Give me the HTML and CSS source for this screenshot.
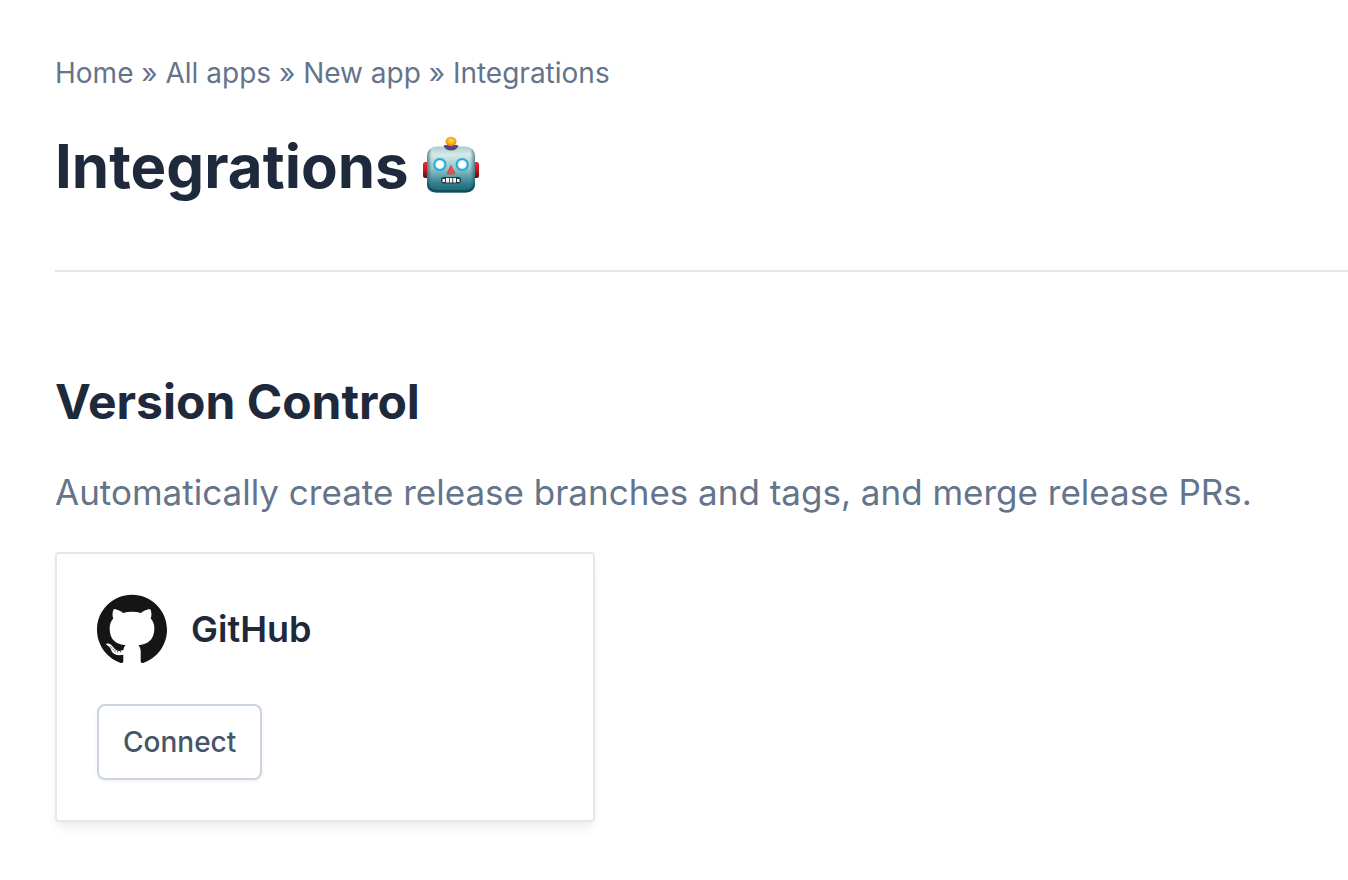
FILE: index.html
```html
<!DOCTYPE html>
<html lang="en">
<head>
<meta charset="utf-8">
<meta name="viewport" content="width=device-width, initial-scale=1">
<title>Integrations</title>
<link rel="stylesheet" href="styles.css">
</head>
<body>
<main class="page">
  <header class="page-header">
    <nav class="breadcrumbs" aria-label="Breadcrumb">
      <a href="#">Home</a> » <a href="#">All apps</a> » <a href="#">New app</a> » <a href="#">Integrations</a>
    </nav>
    <h1 class="page-title">Integrations
      <svg class="robot" viewBox="0 0 60 60" role="img" aria-label="Robot">
        <defs>
          <linearGradient id="face" x1="0" y1="0" x2="0" y2="1">
            <stop offset="0" stop-color="#a9cdce"/><stop offset=".18" stop-color="#d8eae8"/><stop offset=".5" stop-color="#8fc0c5"/><stop offset=".8" stop-color="#32808e"/><stop offset="1" stop-color="#176173"/>
          </linearGradient>
          <linearGradient id="side" x1="0" y1="0" x2="1" y2="0">
            <stop offset="0" stop-color="#205864" stop-opacity=".65"/><stop offset=".1" stop-color="#205864" stop-opacity="0"/><stop offset=".9" stop-color="#205864" stop-opacity="0"/><stop offset="1" stop-color="#205864" stop-opacity=".65"/>
          </linearGradient>
          <linearGradient id="ear" x1="0" y1="0" x2="0" y2="1">
            <stop offset="0" stop-color="#e52a30"/><stop offset=".55" stop-color="#c51522"/><stop offset="1" stop-color="#4e0b13"/>
          </linearGradient>
          <radialGradient id="bulb" cx=".5" cy=".4" r=".6">
            <stop offset="0" stop-color="#ffe34d"/><stop offset=".6" stop-color="#f9a81c"/><stop offset="1" stop-color="#e87817"/>
          </radialGradient>
        </defs>
        <rect x="2" y="26" width="7" height="16" rx="2.500" fill="url(#ear)"/>
        <rect x="51" y="26" width="7" height="16" rx="2.500" fill="url(#ear)"/>
        <rect x="6" y="10.500" width="48" height="46" rx="9" fill="url(#face)"/>
        <rect x="6" y="10.500" width="48" height="46" rx="9" fill="url(#side)"/>
        <path d="M6 46Q9 54 16 54H44Q51 54 54 46V48Q54 56.500 45 56.500H15Q6 56.500 6 48Z" fill="#104655" opacity=".75"/>
        <path d="M22.500 10Q22.500 9 25 9H35Q37.500 9 37.500 10Q35 14.500 30 14.500Q25 14.500 22.500 10Z" fill="#574778"/>
        <ellipse cx="30" cy="5.500" rx="5.500" ry="4.700" fill="url(#bulb)"/>
        <circle cx="18.800" cy="28.500" r="6.600" fill="#25aeda"/>
        <circle cx="41.200" cy="28.500" r="6.600" fill="#25aeda"/>
        <circle cx="18.800" cy="28.500" r="4.600" fill="#c6e9f2"/>
        <circle cx="41.200" cy="28.500" r="4.600" fill="#c6e9f2"/>
        <circle cx="18.800" cy="28.500" r="3.600" fill="#fff"/>
        <circle cx="41.200" cy="28.500" r="3.600" fill="#fff"/>
        <path d="M30 29.500L34 37.500Q30 39 26 37.500Z" fill="#e5554f" stroke="#bd3f43" stroke-width=".7"/>
        <rect x="20" y="41" width="20" height="6.500" rx="3" fill="#243d43"/>
        <path d="M21.500 43H24V46H21.500ZM25 42H28V46.500H25ZM28.800 42H31.300V46.500H28.800ZM32.200 42H35V46.500H32.200ZM36 43H38.500V46H36Z" fill="#f5f6ee"/>
      </svg>
    </h1>
  </header>
  <section class="category">
    <h2 class="category-title">Version Control</h2>
    <p class="category-text">Automatically create release branches and tags, and merge release PRs.</p>
    <article class="card">
      <div class="card-head">
        <svg class="logo" viewBox="0 0 256 250" aria-hidden="true" fill="#161514">
          <path d="M128.001 0C57.317 0 0 57.307 0 128.001c0 56.554 36.676 104.535 87.535 121.460 6.397 1.185 8.746-2.777 8.746-6.158 0-3.052-.12-13.135-.174-23.830-35.610 7.742-43.124-15.103-43.124-15.103-5.823-14.795-14.213-18.730-14.213-18.730-11.613-7.944.876-7.780.876-7.780 12.853.902 19.621 13.190 19.621 13.190 11.417 19.568 29.945 13.911 37.249 10.640 1.149-8.272 4.466-13.920 8.127-17.116-28.431-3.236-58.318-14.212-58.318-63.258 0-13.975 5-25.394 13.188-34.358-1.329-3.224-5.710-16.242 1.240-33.874 0 0 10.749-3.440 35.210 13.121 10.210-2.836 21.160-4.258 32.038-4.307 10.878.049 21.837 1.470 32.066 4.307 24.431-16.560 35.165-13.120 35.165-13.120 6.967 17.630 2.584 30.650 1.255 33.873 8.207 8.964 13.173 20.383 13.173 34.358 0 49.163-29.944 59.988-58.447 63.157 4.591 3.972 8.682 11.762 8.682 23.704 0 17.126-.148 30.910-.148 35.126 0 3.407 2.304 7.398 8.792 6.140C219.370 232.500 256 184.537 256 128.002 256 57.307 198.691 0 128.001 0z"/>
          <ellipse cx="49" cy="190" rx="2" ry="1.700"/><ellipse cx="54" cy="194" rx="2" ry="2"/><ellipse cx="59" cy="200" rx="2" ry="2"/><ellipse cx="66" cy="205" rx="2.500" ry="2"/><ellipse cx="75.500" cy="208" rx="2.500" ry="2"/><ellipse cx="86" cy="208" rx="2.500" ry="2"/>
        </svg>
        <h3 class="card-title">GitHub</h3>
      </div>
      <button class="button" type="button">Connect</button>
    </article>
  </section>
</main>
</body>
</html>
```
FILE: styles.css
```css
* {
  box-sizing: border-box;
}

body {
  margin: 0;
  background: #fff;
  color: #1e293b;
  font-family: Inter, "Liberation Sans", sans-serif;
}

h1, h2, h3, p {
  margin: 0;
}

.page {
  padding: 52px 0 56px 55px;
}

.page-header {
  padding-bottom: 64px;
  border-bottom: 2px solid #e5e7eb;
}

.breadcrumbs {
  color: #64748b;
  font-size: 28px;
  line-height: 42px;
}

.breadcrumbs a {
  color: inherit;
  text-decoration: none;
}

.page-title {
  display: flex;
  align-items: center;
  gap: 12px;
  margin-top: 32px;
  font-size: 60px;
  font-weight: 700;
  line-height: 80px;
}

.robot {
  width: 60px;
  height: 60px;
}

.category {
  padding: 96px 55px 0 0;
}

.category-title {
  font-size: 48px;
  font-weight: 700;
  line-height: 68px;
}

.category-text {
  margin-top: 28px;
  color: #64748b;
  font-size: 35px;
  line-height: 56px;
}

.card {
  width: 100%;
  max-width: 540px;
  margin-top: 32px;
  padding: 40px;
  border: 2px solid #e2e8f0;
  border-radius: 4px;
  box-shadow: 0 8px 12px -2px rgb(0 0 0 / 6%), 0 4px 8px -2px rgb(0 0 0 / 3%);
}

.card-head {
  display: flex;
  align-items: center;
  gap: 24px;
  margin-bottom: 40px;
}

.logo {
  width: 70px;
  height: 70px;
}

.card-title {
  font-size: 36px;
  font-weight: 600;
  line-height: 54px;
}

.button {
  display: block;
  padding: 14px 24px;
  border: 2px solid #cbd5e1;
  border-radius: 8px;
  background: #fff;
  box-shadow: 0 2px 4px rgb(0 0 0 / 5%);
  color: #475569;
  font-family: inherit;
  font-size: 28px;
  font-weight: 500;
  line-height: 44px;
}
```
